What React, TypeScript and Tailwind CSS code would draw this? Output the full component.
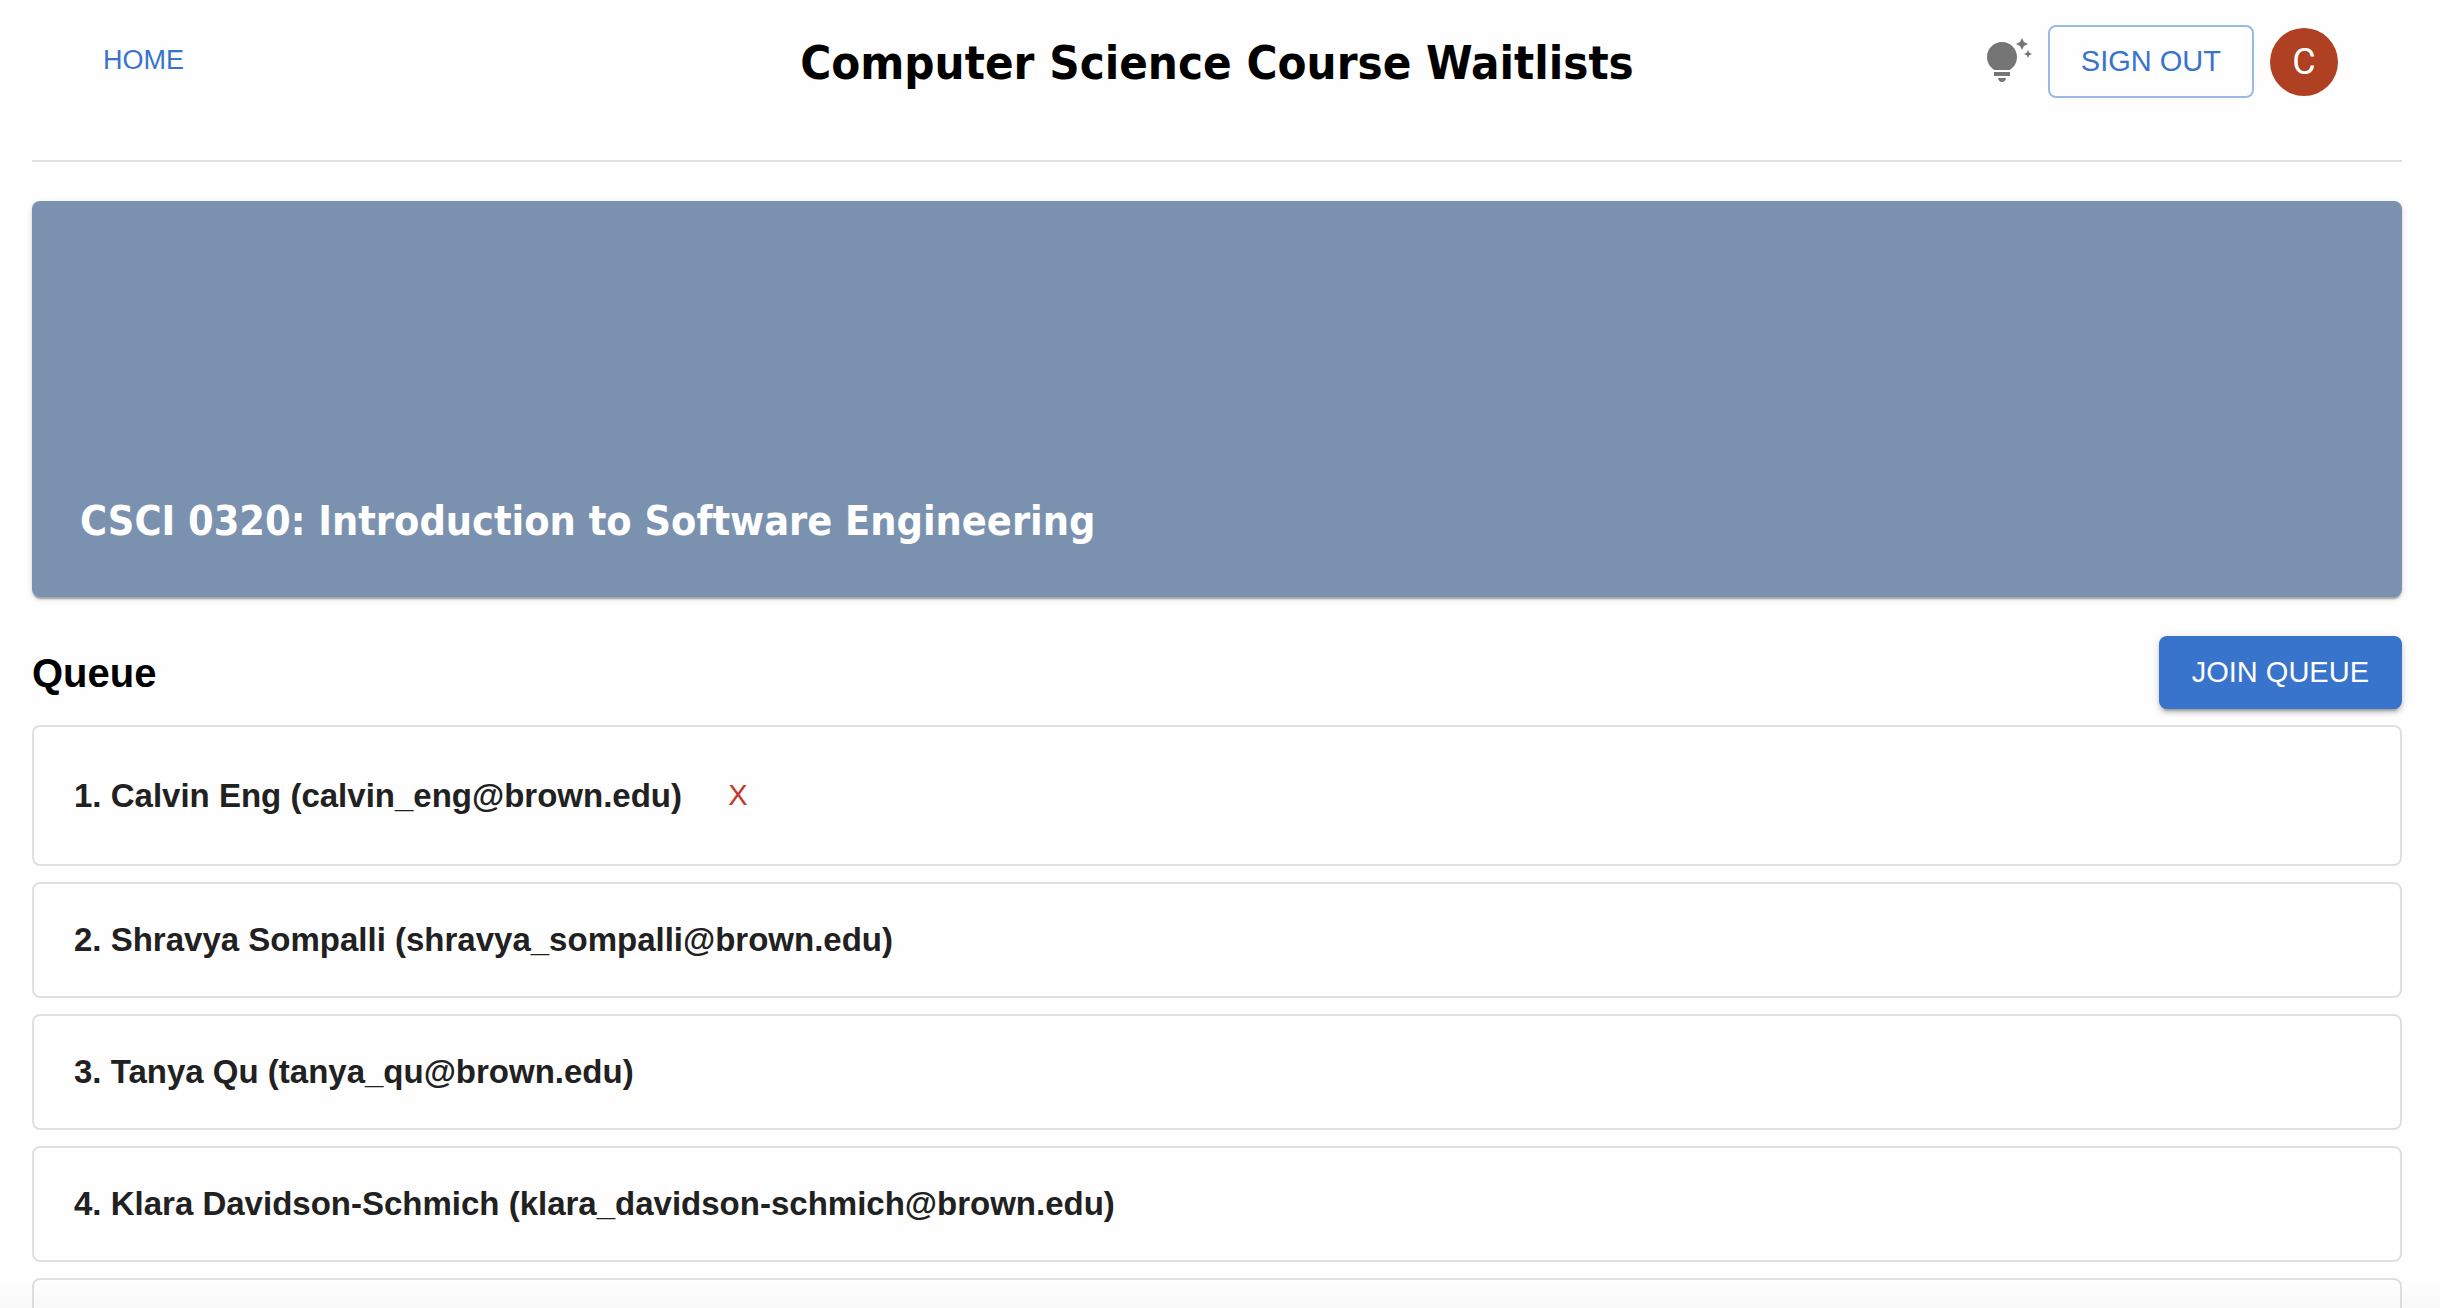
import { MdTipsAndUpdates } from "react-icons/md";

type Entry = { name: string; email: string; removable?: boolean };

const queue: Entry[] = [
  { name: "Calvin Eng", email: "calvin_eng@brown.edu", removable: true },
  { name: "Shravya Sompalli", email: "shravya_sompalli@brown.edu" },
  { name: "Tanya Qu", email: "tanya_qu@brown.edu" },
  { name: "Klara Davidson-Schmich", email: "klara_davidson-schmich@brown.edu" },
];

function Header() {
  return (
    <header className="grid grid-cols-[1fr_auto_1fr] items-start border-b-2 border-[#e0e0e0] px-16 pt-[25px] pb-[60px]">
      <nav>
        <a href="#" className="inline-block px-[7px] py-3 text-[27px] leading-[46px] text-[#3873cc]">
          HOME
        </a>
      </nav>
      <h1 className="font-['DejaVu_Sans_Condensed','DejaVu_Sans',sans-serif] text-[47px] leading-[75px] font-bold text-black">
        Computer Science Course Waitlists
      </h1>
      <div className="flex items-center justify-end gap-4">
        <button type="button" aria-label="Suggestions" className="text-[#757575]">
          <MdTipsAndUpdates className="size-12" />
        </button>
        <button
          type="button"
          className="h-[73px] rounded-lg border-2 border-[#9bb9e6] px-[31px] text-[29px] text-[#3873cc]"
        >
          SIGN OUT
        </button>
        <div className="flex size-[68px] items-center justify-center rounded-full bg-[#af4021] font-['Roboto',sans-serif] text-[36px] text-white">
          C
        </div>
      </div>
    </header>
  );
}

function CourseBanner() {
  return (
    <section className="mt-[39px] flex h-[396px] items-end rounded-lg bg-[#7a92b0] px-12 pb-12 shadow-[0_4px_2px_-2px_rgba(0,0,0,0.2),0_2px_2px_0_rgba(0,0,0,0.14),0_2px_6px_0_rgba(0,0,0,0.12)]">
      <h2 className="font-['DejaVu_Sans_Condensed','DejaVu_Sans',sans-serif] text-[41px] leading-[56px] font-bold text-white">
        CSCI 0320: Introduction to Software Engineering
      </h2>
    </section>
  );
}

function QueueItem({ position, entry }: { position: number; entry: Entry }) {
  return (
    <li className="flex items-center rounded-lg border-2 border-[#e0e0e0] px-10 py-8">
      <span className="text-[33px] leading-[48px] font-bold text-[#212121]">
        {position}. {entry.name} ({entry.email})
      </span>
      {entry.removable && (
        <button
          type="button"
          aria-label={`Remove ${entry.name}`}
          className="h-[73px] w-28 text-[29px] text-[#c5362d]"
        >
          X
        </button>
      )}
    </li>
  );
}

export default function App() {
  return (
    <div className="relative h-screen overflow-hidden bg-[#fefefe] pr-[38px] pl-8 font-['Liberation_Sans',sans-serif]">
      <Header />
      <main>
        <CourseBanner />
        <div className="mt-[39px] flex items-center justify-between">
          <h3 className="text-[40px] font-bold text-black">Queue</h3>
          <button
            type="button"
            className="h-[73px] rounded-lg bg-[#3873cc] px-[33px] text-[29px] text-white shadow-[0_6px_2px_-4px_rgba(0,0,0,0.2),0_4px_4px_0_rgba(0,0,0,0.14),0_2px_10px_0_rgba(0,0,0,0.12)]"
          >
            JOIN QUEUE
          </button>
        </div>
        <ol className="mt-4 flex flex-col gap-4">
          {queue.map((entry, i) => (
            <QueueItem key={entry.email} position={i + 1} entry={entry} />
          ))}
          <li aria-hidden="true" className="h-[116px] rounded-lg border-2 border-[#e0e0e0]" />
        </ol>
      </main>
      <div className="pointer-events-none absolute inset-x-0 bottom-0 h-8 bg-linear-to-t from-black/2 to-transparent" />
    </div>
  );
}
